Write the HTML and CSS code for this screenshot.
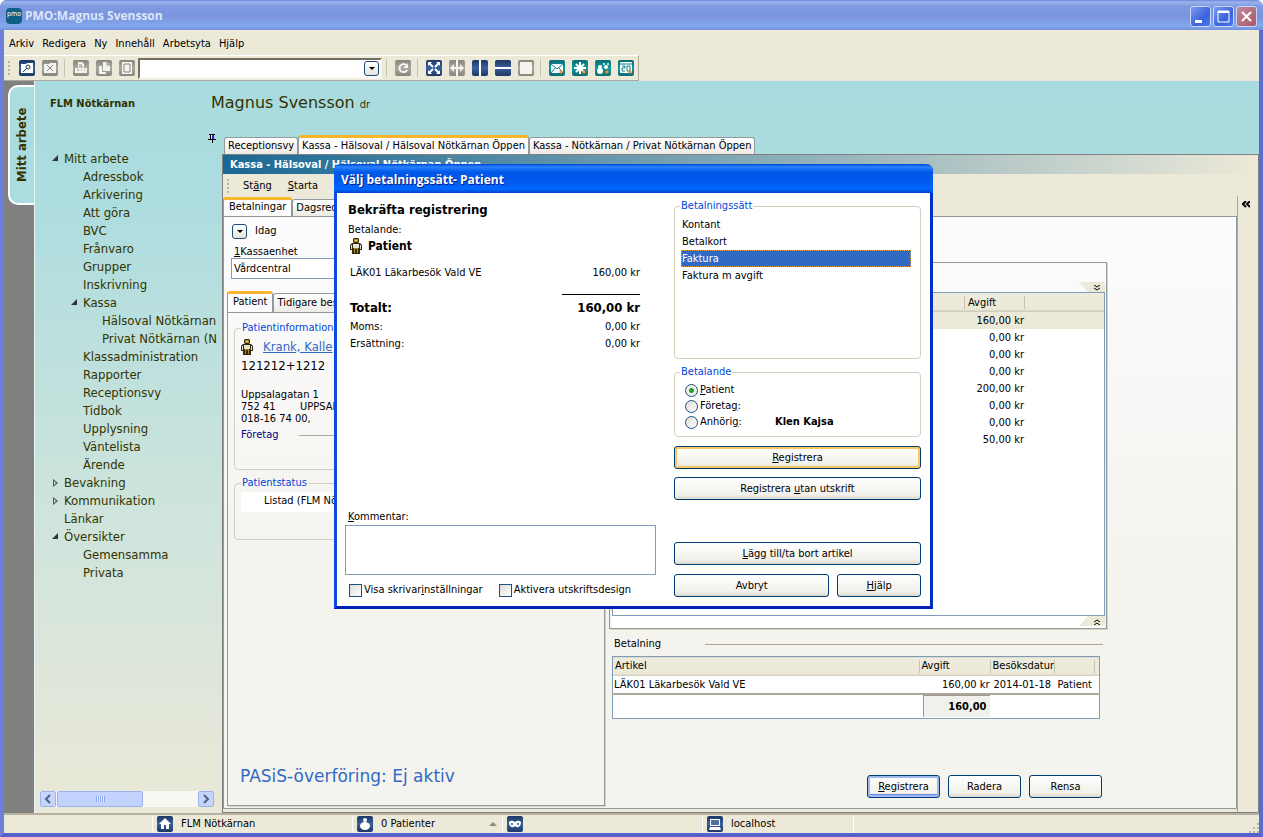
FILE: index.html
```html
<!DOCTYPE html>
<html lang="sv">
<head>
  <meta charset="UTF-8" />
  <meta name="viewport" content="width=device-width, initial-scale=1.0"/>
  <title>PMO:Magnus Svensson</title>
  <link rel="stylesheet" href="styles.css">
</head>
<body>
  <!-- Shared icons -->
  <svg class="defs" width="0" height="0" aria-hidden="true">
    <defs>
      <linearGradient id="navy" x1="0" y1="0" x2="0" y2="1"><stop offset="0" stop-color="#1c3765"/><stop offset=".5" stop-color="#3a619c"/><stop offset="1" stop-color="#1c3765"/></linearGradient>
      <linearGradient id="grey" x1="0" y1="0" x2="0" y2="1"><stop offset="0" stop-color="#87867e"/><stop offset=".5" stop-color="#aaa9a0"/><stop offset="1" stop-color="#87867e"/></linearGradient>
      <linearGradient id="teal" x1="0" y1="0" x2="0" y2="1"><stop offset="0" stop-color="#0b6a74"/><stop offset=".5" stop-color="#129aa0"/><stop offset="1" stop-color="#0b6a74"/></linearGradient>
      <symbol id="person" viewBox="0 0 12 16">
        <path d="M4 0h4l1 1v3l-1 1h2l2 2v5h-2v4H2v-4H0V7l2-2h2L3 4V1z" fill="#33290f"/>
        <path d="M4 1h4v3H4zM4 10h1v5H4zM7 10h1v5H7zM5 10h2v1H5z" fill="#b08a16"/>
        <path d="M3 6h6v4H3zM1 7h1v4H1zM10 7h1v4h-1z" fill="#e8e4d4"/><path d="M5 2h2v1H5z" fill="#f0d860"/>
      </symbol>
    </defs>
  </svg>

  <div class="window">
    <!-- Title bar -->
    <header class="titlebar">
      <span class="logo">pmo</span>
      <h1>PMO:Magnus Svensson</h1>
      <div class="win-buttons">
        <button type="button" aria-label="Minimera"><svg width="19" height="19"><path d="M4 13h7v3H4z" fill="#fff"/></svg></button>
        <button type="button" aria-label="Maximera"><svg width="19" height="19"><path d="M4 4h11v11H4z" fill="none" stroke="#fff"/><path d="M4 4h11v2H4z" fill="#fff"/></svg></button>
        <button type="button" class="close" aria-label="Stäng"><svg width="19" height="19"><path d="M5 5l9 9M14 5l-9 9" stroke="#fff" stroke-width="2"/></svg></button>
      </div>
    </header>

    <!-- Menu -->
    <nav class="menubar">
      <a href="#">Arkiv</a>
      <a href="#">Redigera</a>
      <a href="#">Ny</a>
      <a href="#">Innehåll</a>
      <a href="#">Arbetsyta</a>
      <a href="#">Hjälp</a>
    </nav>

    <!-- Toolbar -->
    <div class="toolbar">
      <span class="grip"></span>
      <div class="tools">
        <button type="button" aria-label="Sök"><svg viewBox="0 0 16 16"><rect width="16" height="16" rx="2" fill="url(#navy)"/><path d="M2 4h5l1-1h6v10H2z" fill="#fff"/><circle cx="9" cy="7" r="2" fill="none" stroke="#1c3765"/><path d="M8 8l-4 4" stroke="#1c3765"/></svg></button>
        <button type="button" aria-label="Stäng patient"><svg viewBox="0 0 16 16"><rect width="16" height="16" rx="2" fill="url(#grey)"/><path d="M2 4h5l1-1h6v10H2z" fill="#f4f3ee"/><path d="M5 5l6 6M11 5l-6 6" stroke="#87867e"/></svg></button>
      </div>
      <span class="sep"></span>
      <div class="tools">
        <button type="button" aria-label="Skriv ut"><svg viewBox="0 0 16 16"><rect width="16" height="16" rx="2" fill="url(#grey)"/><path d="M5 2h4l2 2v4h3v5H2V8h3z" fill="#f4f3ee"/><path d="M6 5h3M6 7h4M4 10h2M8 10h1M11 10h1" stroke="#87867e"/></svg></button>
        <button type="button" aria-label="Kopiera"><svg viewBox="0 0 16 16"><rect width="16" height="16" rx="2" fill="url(#grey)"/><path d="M7 2h4l3 3v6H7z" fill="#f4f3ee"/><path d="M3 6h3v6h4v2H3z" fill="#f4f3ee"/><path d="M11 2v3h3" fill="none" stroke="#87867e"/></svg></button>
        <button type="button" aria-label="Dokument"><svg viewBox="0 0 16 16"><rect width="16" height="16" rx="2" fill="url(#grey)"/><path d="M3 2h10v12H3z" fill="#f4f3ee"/><path d="M5 4h6v8H5z" fill="none" stroke="#87867e"/></svg></button>
      </div>
      <div class="combo">
        <input type="text" aria-label="Sökfält">
        <button type="button" class="drop" aria-label="Visa lista"></button>
      </div>
      <span class="sep after-combo"></span>
      <div class="tools">
        <button type="button" aria-label="Uppdatera"><svg viewBox="0 0 16 16"><rect width="16" height="16" rx="2" fill="url(#grey)"/><path d="M11 5a4 4 0 1 0 1 5" fill="none" stroke="#f4f3ee" stroke-width="2"/><path d="M13 3v5H8z" fill="#f4f3ee"/></svg></button>
      </div>
      <span class="sep"></span>
      <div class="tools">
        <button type="button" aria-label="Maximera yta"><svg viewBox="0 0 16 16"><rect width="16" height="16" rx="2" fill="url(#navy)"/><path d="M3 3l4 4M13 3L9 7M3 13l4-4M13 13L9 9" stroke="#fff" stroke-width="2"/><path d="M2 2h4L2 6zM14 2h-4l4 4zM2 14h4l-4-4zM14 14h-4l4-4z" fill="#fff"/></svg></button>
        <button type="button" aria-label="Bredda"><svg viewBox="0 0 16 16"><rect width="16" height="16" rx="2" fill="url(#grey)"/><path d="M7 0h2v16H7zM1 8l4-4v3h6V4l4 4-4 4V9H5v3z" fill="#f4f3ee"/></svg></button>
        <button type="button" aria-label="Dela lodrätt"><svg viewBox="0 0 16 16"><rect width="16" height="16" rx="2" fill="url(#navy)"/><path d="M7 0h2v16H7z" fill="#fff"/></svg></button>
        <button type="button" aria-label="Dela vågrätt"><svg viewBox="0 0 16 16"><rect width="16" height="16" rx="2" fill="url(#navy)"/><path d="M0 7h16v2H0z" fill="#fff"/></svg></button>
        <button type="button" aria-label="En yta"><svg viewBox="0 0 16 16"><rect width="16" height="16" rx="2" fill="url(#grey)"/><rect x="2" y="2" width="12" height="12" rx="1" fill="#f4f3ee"/></svg></button>
      </div>
      <span class="sep"></span>
      <div class="tools">
        <button type="button" aria-label="Nytt meddelande"><svg viewBox="0 0 16 16"><rect width="16" height="16" rx="2" fill="url(#teal)"/><path d="M2 4h12v9H2z" fill="#fff"/><path d="M2 4l6 5 6-5M2 13l4-5M14 13l-4-5" fill="none" stroke="#0f7f86"/><path d="M12 10l2 2-2 2-2-2z" fill="#f58a1f"/></svg></button>
        <button type="button" aria-label="Ny aktivitet"><svg viewBox="0 0 16 16"><rect width="16" height="16" rx="2" fill="url(#teal)"/><path d="M8 2v12M2 8h12M4 4l8 8M12 4l-8 8" stroke="#fff" stroke-width="2"/><path d="M12 10l2 2-2 2-2-2z" fill="#f58a1f"/></svg></button>
        <button type="button" aria-label="Ny grupp"><svg viewBox="0 0 16 16"><rect width="16" height="16" rx="2" fill="url(#teal)"/><circle cx="5" cy="11" r="3" fill="#fff"/><circle cx="5" cy="7" r="2" fill="#fff"/><circle cx="11" cy="7" r="2" fill="#fff"/><circle cx="9" cy="4" r="1" fill="#fff"/><circle cx="13" cy="4" r="1" fill="#fff"/><path d="M12 10l2 2-2 2-2-2z" fill="#f58a1f"/></svg></button>
        <button type="button" aria-label="Ny bokning"><svg viewBox="0 0 16 16"><rect width="16" height="16" rx="2" fill="url(#teal)"/><rect x="2" y="2" width="12" height="11" rx="1" fill="#fff"/><path d="M2 4h12M4 6h3v2H4v3h3M9 6h3v5H9z" fill="none" stroke="#0f7f86"/><path d="M12 10l2 2-2 2-2-2z" fill="#f58a1f"/></svg></button>
      </div>
    </div>

    <!-- Work area -->
    <div class="work">
      <div class="rail"><button type="button" class="rail-tab">Mitt arbete</button></div>

      <aside class="sidebar">
        <h2>FLM Nötkärnan</h2>
        <ul class="tree">
          <li class="open"><a href="#">Mitt arbete</a>
            <ul>
              <li><a href="#">Adressbok</a></li>
              <li><a href="#">Arkivering</a></li>
              <li><a href="#">Att göra</a></li>
              <li><a href="#">BVC</a></li>
              <li><a href="#">Frånvaro</a></li>
              <li><a href="#">Grupper</a></li>
              <li><a href="#">Inskrivning</a></li>
              <li class="open"><a href="#">Kassa</a>
                <ul>
                  <li><a href="#">Hälsoval Nötkärnan</a></li>
                  <li><a href="#">Privat Nötkärnan (N</a></li>
                </ul>
              </li>
              <li><a href="#">Klassadministration</a></li>
              <li><a href="#">Rapporter</a></li>
              <li><a href="#">Receptionsvy</a></li>
              <li><a href="#">Tidbok</a></li>
              <li><a href="#">Upplysning</a></li>
              <li><a href="#">Väntelista</a></li>
              <li><a href="#">Ärende</a></li>
            </ul>
          </li>
          <li class="closed"><a href="#">Bevakning</a></li>
          <li class="closed"><a href="#">Kommunikation</a></li>
          <li><a href="#">Länkar</a></li>
          <li class="open"><a href="#">Översikter</a>
            <ul>
              <li><a href="#">Gemensamma</a></li>
              <li><a href="#">Privata</a></li>
            </ul>
          </li>
        </ul>
        <div class="hscroll">
          <button type="button" aria-label="Rulla vänster"><svg width="14" height="14"><path d="M9 3L5 7l4 4" fill="none" stroke="#4d6185" stroke-width="2"/></svg></button>
          <span class="thumb"></span>
          <button type="button" aria-label="Rulla höger"><svg width="14" height="14"><path d="M5 3l4 4-4 4" fill="none" stroke="#4d6185" stroke-width="2"/></svg></button>
        </div>
      </aside>

      <main class="workspace">
        <div class="user">Magnus Svensson <small>dr</small></div>
        <div class="tab-row">
          <svg class="pin" width="8" height="9"><path d="M1 0h6v1H6v4h2v1H5v3H4V6H0V5h2V1H1z" fill="#000"/><path d="M3 1h1v4H3z" fill="#cfe"/><path d="M4 1h2v4H4z" fill="#22c"/></svg>
          <div class="tabs view-tabs">
            <button type="button">Receptionsvy</button>
            <button type="button" class="active">Kassa - Hälsoval / Hälsoval Nötkärnan Öppen</button>
            <button type="button">Kassa - Nötkärnan / Privat Nötkärnan Öppen</button>
          </div>
        </div>

        <section class="panel">
          <h2 class="panel-title">Kassa - Hälsoval / Hälsoval Nötkärnan Öppen</h2>
          <div class="panel-body">
            <div class="panel-main">
              <div class="actions">
                <span class="grip"></span>
                <a href="#">St<u>ä</u>ng</a>
                <a href="#"><u>S</u>tarta</a>
              </div>
              <div class="tabs">
                <button type="button" class="active">Betalningar</button>
                <button type="button">Dagsred</button>
              </div>
              <div class="page">
                <div class="left">
                  <div class="period"><button type="button" class="drop" aria-label="Välj period"></button><span>Idag</span></div>
                  <label class="unit-label" for="unit"><u>1</u>Kassaenhet</label>
                  <input class="unit" id="unit" type="text" value="Vårdcentral">
                  <div class="tabs">
                    <button type="button" class="active">Patient</button>
                    <button type="button">Tidi<u>g</u>are besök</button>
                  </div>
                  <div class="patient">
                    <fieldset class="info">
                      <legend>Patientinformation</legend>
                      <div class="name"><svg class="person"><use href="#person"/></svg><a href="#">Krank, Kalle</a></div>
                      <p class="pnr">121212+1212</p>
                      <address>Uppsalagatan 1<br><span class="zip">752 41</span>UPPSALA<br>018-16 74 00,</address>
                      <p class="rule">Företag</p>
                    </fieldset>
                    <fieldset class="status">
                      <legend>Patientstatus</legend>
                      <p>Listad (FLM Nötkärnan)</p>
                    </fieldset>
                    <p class="pasis">PASiS-överföring: Ej aktiv</p>
                  </div>
                </div>

                <div class="right">
                  <div class="articles">
                    <div class="fold">
                      <button type="button" aria-label="Fäll ner"><svg width="6" height="6"><path d="M0 0l3 2 3-2M0 3l3 2 3-2" fill="none" stroke="#000"/></svg></button>
                    </div>
                    <div class="list">
                      <table>
                        <thead><tr><th></th><th>Avgift</th><th></th></tr></thead>
                        <tbody>
                          <tr class="selected"><td></td><td>160,00 kr</td><td></td></tr>
                          <tr><td></td><td>0,00 kr</td><td></td></tr>
                          <tr><td></td><td>0,00 kr</td><td></td></tr>
                          <tr><td></td><td>0,00 kr</td><td></td></tr>
                          <tr><td></td><td>200,00 kr</td><td></td></tr>
                          <tr><td></td><td>0,00 kr</td><td></td></tr>
                          <tr><td></td><td>0,00 kr</td><td></td></tr>
                          <tr><td></td><td>50,00 kr</td><td></td></tr>
                        </tbody>
                      </table>
                    </div>
                    <div class="fold bottom">
                      <button type="button" aria-label="Fäll upp"><svg width="6" height="6"><path d="M0 3l3-2 3 2M0 6l3-2 3 2" fill="none" stroke="#000"/></svg></button>
                    </div>
                  </div>
                  <p class="rule payment-title">Betalning</p>
                  <table class="payment">
                    <thead><tr><th>Artikel</th><th>Avgift</th><th>Besöksdatur</th><th></th><th></th></tr></thead>
                    <tbody><tr><td>LÄK01 Läkarbesök Vald VE</td><td>160,00 kr</td><td>2014-01-18</td><td colspan="2">Patient</td></tr></tbody>
                    <tfoot><tr><td></td><td><span>160,00</span></td><td></td><td colspan="2"></td></tr></tfoot>
                  </table>
                  <div class="buttons">
                    <button type="button" class="btn focused"><u>R</u>egistrera</button>
                    <button type="button" class="btn">Radera</button>
                    <button type="button" class="btn">Rensa</button>
                  </div>
                </div>
              </div>
            </div>
            <div class="panel-side"><button type="button" aria-label="Visa sidopanel"><svg width="8" height="7"><path d="M4 0L1 3l3 3M8 0L5 3l3 3" fill="none" stroke="#000" stroke-width="2"/></svg></button></div>
          </div>
        </section>
      </main>
    </div>

    <!-- Status bar -->
    <footer class="statusbar">
      <span></span>
      <span><svg viewBox="0 0 16 16"><rect width="16" height="16" rx="2" fill="url(#navy)"/><path d="M8 2l6 6h-2v5H9V9H7v4H4V8H2z" fill="#fff"/></svg>FLM Nötkärnan</span>
      <span><svg viewBox="0 0 16 16"><rect width="16" height="16" rx="2" fill="url(#navy)"/><circle cx="8" cy="4" r="2" fill="#fff"/><ellipse cx="8" cy="10" rx="5" ry="4" fill="#fff"/></svg>0 Patienter<i class="up"></i></span>
      <span><svg viewBox="0 0 16 16"><rect width="16" height="16" rx="2" fill="url(#navy)"/><path d="M2 6c2-2 4-1 6 0 2-1 4-2 6 0 0 4-3 7-6 4-3 3-6 0-6-4z" fill="#fff"/><circle cx="5" cy="8" r="1" fill="#2e5088"/><circle cx="11" cy="8" r="1" fill="#2e5088"/></svg></span>
      <span><svg viewBox="0 0 16 16"><rect width="16" height="16" rx="2" fill="url(#navy)"/><path d="M3 3h10v7H3z" fill="#fff"/><path d="M4 4h8v5H4z" fill="#55719f"/><path d="M3 11h10l1 3H2z" fill="#fff"/></svg>localhost</span>
      <span></span>
      <svg class="resize" width="10" height="10"><path d="M8 0h2v2H8zM4 4h2v2H4zM8 4h2v2H8zM0 8h2v2H0zM4 8h2v2H4zM8 8h2v2H8z" fill="#b8b4a2"/></svg>
    </footer>
  </div>

  <!-- Payment dialog -->
  <form class="dialog" role="dialog" aria-labelledby="dialog-title">
    <h2 class="dialog-title" id="dialog-title">Välj betalningssätt- Patient</h2>
    <div class="dialog-body">
      <div class="summary">
        <h3>Bekräfta registrering</h3>
        <p class="payer-label">Betalande:</p>
        <p class="payer"><svg class="person"><use href="#person"/></svg>Patient</p>
        <div class="line article"><span>LÄK01 Läkarbesök Vald VE</span><span>160,00 kr</span></div>
        <div class="line total"><span>Totalt:</span><span>160,00 kr</span></div>
        <div class="line"><span>Moms:</span><span>0,00 kr</span></div>
        <div class="line"><span>Ersättning:</span><span>0,00 kr</span></div>
        <label class="comment-label" for="comment"><u>K</u>ommentar:</label>
        <textarea id="comment"></textarea>
        <div class="checks">
          <label><input type="checkbox">Visa skrivar<u>i</u>nställningar</label>
          <label><input type="checkbox">Aktivera utskriftsdesign</label>
        </div>
      </div>
      <div class="choices">
        <fieldset class="methods">
          <legend>Betalningssätt</legend>
          <select size="8" aria-label="Betalningssätt">
            <option>Kontant</option>
            <option>Betalkort</option>
            <option selected>Faktura</option>
            <option>Faktura m avgift</option>
          </select>
        </fieldset>
        <fieldset class="payers">
          <legend>Betalande</legend>
          <label><input type="radio" name="payer" checked><span><u>P</u>atient</span></label>
          <label><input type="radio" name="payer"><span>Företa<u>g</u>:</span></label>
          <label><input type="radio" name="payer"><span>Anhöri<u>g</u>:</span><b>Klen Kajsa</b></label>
        </fieldset>
        <button type="button" class="btn default"><u>R</u>egistrera</button>
        <button type="button" class="btn">Registrera <u>u</u>tan utskrift</button>
        <button type="button" class="btn lower"><u>L</u>ägg till/ta bort artikel</button>
        <div class="pair">
          <button type="button" class="btn">Avbryt</button>
          <button type="button" class="btn"><u>H</u>jälp</button>
        </div>
      </div>
    </div>
  </form>
</body>
</html>
```
FILE: styles.css
```css
/* Global Reset */
* { margin: 0; padding: 0; box-sizing: border-box; }
html, body { height: 100%; }
body {
  position: relative;
  font-family: "DejaVu Sans Condensed", "DejaVu Sans", sans-serif;
  font-size: 11px;
  line-height: 16px;
  color: #000;
  overflow: hidden;
}
button, input, textarea, select { font: inherit; color: inherit; }
button { background: none; border: 0; }
a { color: inherit; text-decoration: none; }
ul { list-style: none; }
svg { display: block; flex: none; }
table { border-collapse: collapse; table-layout: fixed; width: 100%; }
th { font-weight: normal; text-align: left; }
.defs { position: absolute; }
.person { width: 12px; height: 16px; }

/* Window */
.window {
  display: flex;
  flex-direction: column;
  height: 100%;
  background: #ece9d8;
  border: 4px solid #6b7fdb;
  border-top: 0;
  border-right-color: #5b6bd0;
  border-bottom-color: #5560c8;
  border-radius: 7px 7px 0 0;
}
.titlebar {
  display: flex;
  align-items: center;
  height: 30px;
  margin: 0 -4px;
  padding: 2px 6px 0;
  background: linear-gradient(#6a86d8, #9cb4ec 2px, #7f9be2 6px, #7a94de 16px, #82a8ec 26px, #7490dc);
  border-radius: 7px 7px 0 0;
}
.logo {
  width: 16px;
  height: 16px;
  border-radius: 4px;
  background: #0f5f86;
  color: #fff;
  font-size: 7px;
  line-height: 13px;
  text-align: center;
}
.titlebar h1 {
  margin-left: 3px;
  font: bold 12px/20px "Open Sans", sans-serif;
  color: #dce6fa;
}
.win-buttons { display: flex; gap: 2px; margin-left: auto; }
.win-buttons button {
  width: 21px;
  height: 21px;
  border: 1px solid #c9d5f6;
  border-radius: 3px;
  background: linear-gradient(135deg, #7c9cf0, #3c62dc 60%, #4a7af0);
}
.win-buttons .close { background: linear-gradient(135deg, #c08a9a, #a8586a); }

/* Menu */
.menubar { display: flex; gap: 8px; height: 25px; padding: 6px 5px 0; }

/* Toolbar */
.toolbar {
  display: flex;
  align-items: center;
  align-self: flex-start;
  height: 26px;
  padding: 0 4px;
  border: 1px solid #fff;
  border-left: 0;
  border-right-color: #aca899;
  border-bottom-color: #aca899;
}
.grip { width: 2px; height: 14px; margin-right: 9px; background: repeating-linear-gradient(#b8b4a4 0 2px, transparent 2px 4px); }
.tools { display: flex; gap: 7px; }
.tools button, .tools svg { width: 16px; height: 16px; display: block; }
.sep { width: 1px; height: 18px; margin: 0 8px 0 6px; background: #c5c2b2; }
.after-combo { margin-left: 4px; }
.combo {
  display: flex;
  align-items: center;
  width: 244px;
  height: 21px;
  margin-left: 3px;
  padding-right: 1px;
  background: #fff;
  border: 2px solid #716f64;
  border-color: #716f64 #f6f5ee #f6f5ee #716f64;
}
.combo input { flex: 1; min-width: 0; border: 0; outline: 0; }
.drop {
  width: 15px;
  height: 15px;
  border: 1px solid #1d4a75;
  border-radius: 3px;
  background: linear-gradient(#fff, #e6e4da);
}
.drop::before {
  content: "";
  display: block;
  width: 0;
  margin: 0 auto;
  border: 3px solid transparent;
  border-top-color: #000;
  border-bottom: 0;
}

/* Work area */
.work {
  flex: 1;
  display: flex;
  min-height: 0;
  background: linear-gradient(#a8dbdf, #acdcdf 15%, #cfe4dc 60%, #e8e8d8 95%);
}
.rail { width: 30px; padding: 4px 0 0 4px; background: #808080; }
.rail-tab {
  width: 26px;
  height: 120px;
  background: #aadce0;
  border: 2px solid #fff;
  border-left: 0;
  border-radius: 0 10px 10px 0;
  font-size: 13px;
  font-weight: bold;
  color: #333300;
  writing-mode: vertical-rl;
  transform: rotate(180deg);
}

/* Sidebar */
.sidebar {
  display: flex;
  flex-direction: column;
  width: 188px;
  padding: 15px 8px 6px 5px;
  border-left: 1px solid #e8f4f0;
  color: #333300;
}
.sidebar h2 { margin: 0 0 38px 10px; font-size: 11px; line-height: 16px; }
.tree { flex: 1; margin-right: -8px; padding-left: 24px; font-size: 13px; line-height: 18px; white-space: nowrap; }
.tree ul { padding-left: 19px; }
.open::before, .closed::before {
  content: "";
  float: left;
  width: 6px;
  height: 6px;
  margin: 5px 0 0 -12px;
  background: #333;
  clip-path: polygon(100% 0, 100% 100%, 0 100%);
}
.closed::before { height: 8px; width: 5px; margin: 5px 0 0 -11px; background: #555; clip-path: polygon(0 0, 100% 50%, 0 100%, 0 0, 1px 2px, 1px 6px, 3px 50%, 1px 2px); }
.hscroll { display: flex; background: #f8f7f2; }
.hscroll button {
  width: 16px;
  height: 16px;
  border: 1px solid #9bb3ec;
  border-radius: 2px;
  background: #c6d5fb;
}
.hscroll button:last-child { margin-left: auto; }
.thumb {
  width: 86px;
  margin-left: 1px;
  border: 1px solid #9bb3ec;
  border-radius: 2px;
  background: repeating-linear-gradient(90deg, #8aa5e8 0 1px, #e4ecff 1px 2px) center / 9px 6px no-repeat, #c3d3fd;
}

/* Workspace */
.workspace { flex: 1; display: flex; flex-direction: column; min-width: 0; }
.user { margin: 11px 0 0 -11px; font: 16px/22px "DejaVu Sans", sans-serif; color: #333300; }
.user small { font: 11px "DejaVu Sans Condensed", sans-serif; }
.tab-row { display: flex; align-items: flex-end; margin: 20px 0 0 -14px; }
.pin { margin: 0 8px 11px 0; }
.tabs { display: flex; align-items: flex-end; }
.tabs button {
  height: 17px;
  padding: 0 3px;
  background: linear-gradient(#fff, #ecebe6);
  border: 1px solid #919b9c;
  border-bottom: 0;
  border-radius: 3px 3px 0 0;
  line-height: 16px;
  white-space: nowrap;
}
.tabs .active {
  height: 19px;
  padding: 0 5px 2px;
  background: #fcfcfe;
  border-top: 3px solid #f9b52c;
  line-height: 14px;
}
.view-tabs .active { padding: 0 3px 1px; }
.panel { flex: 1; display: flex; flex-direction: column; min-height: 0; border: 1px solid #808080; background: #ece9d8; }
.panel-title {
  height: 19px;
  padding-left: 7px;
  background: linear-gradient(90deg, #1a6894, #ece9d8);
  color: #fff;
  font-size: 11px;
  line-height: 19px;
}
.panel-body { flex: 1; display: flex; min-height: 0; }
.panel-main { flex: 1; display: flex; flex-direction: column; min-width: 0; padding-bottom: 3px; }
.panel-side { width: 21px; margin-top: 22px; padding: 5px 4px; border-left: 1px solid #aca899; }
.panel-side button { display: block; }
.actions { display: flex; align-items: center; gap: 16px; height: 23px; padding-left: 4px; }
.actions .grip { margin-right: -2px; }
.page {
  flex: 1;
  display: grid;
  grid-template-columns: 378fr 498fr 125fr;
  column-gap: 4px;
  min-height: 0;
  padding: 0 0 2px 3px;
  background: linear-gradient(#fcfcfe, #f4f3ee 60%);
  border: 1px solid #919b9c;
}
.left, .right { display: flex; flex-direction: column; min-width: 0; min-height: 0; }
.period { display: flex; align-items: center; gap: 8px; padding: 6px 0 0 5px; }
.unit-label { margin: 6px 0 0 7px; line-height: 13px; }
.unit {
  height: 21px;
  margin: 0 5px 12px 4px;
  padding: 0 2px;
  background: #fff;
  border: 1px solid #7f9db9;
}
.left .tabs button { height: 19px; }
.left .tabs .active { height: 21px; }
.patient {
  flex: 1;
  display: flex;
  flex-direction: column;
  padding: 8px 6px 19px;
  border: 1px solid #919b9c;
  box-shadow: 1px 1px #d8d5c8;
}
fieldset { border: 1px solid #d0d0bf; border-radius: 4px; min-width: 0; padding: 0 5px; }
legend { padding: 0 1px; color: #0046d5; line-height: 14px; }
.info { height: 149px; padding-left: 6px; }
.info .name { display: flex; gap: 10px; align-items: center; padding-top: 4px; font-size: 13px; }
.name a { color: #316ac5; text-decoration: underline; }
.pnr { margin-top: 3px; font-size: 13px; }
address { margin-top: 15px; font-style: normal; line-height: 12px; }
.zip { display: inline-block; width: 59px; }
.rule { display: flex; align-items: center; gap: 20px; }
.rule::after { content: ""; flex: 1; border-top: 1px solid #aca899; }
.info .rule { margin-top: 2px; color: #000080; }
.status { height: 64px; margin-top: 6px; padding: 2px 6px; }
.status p { padding-left: 23px; height: 20px; line-height: 18px; background: #fff; }
.pasis { margin: auto 0 0 6px; color: #316ac5; font: 17px/20px "DejaVu Sans", sans-serif; }

/* Articles and payment */
.articles {
  flex: 1;
  display: flex;
  flex-direction: column;
  margin-top: 45px;
  padding: 0 1px 0 2px;
  border: 1px solid #919b9c;
  box-shadow: 1px 1px #d8d5c8;
}
.fold { display: flex; justify-content: flex-end; align-items: flex-end; height: 29px; }
.fold button { width: 26px; height: 10px; padding: 2px 0 0 15px; background: #ece9d8; clip-path: polygon(0 0, 100% 0, 100% 100%, 35% 100%); }
.bottom { height: 12px; align-items: flex-start; background: #fff; }
.bottom button { clip-path: polygon(35% 0, 100% 0, 100% 100%, 0 100%); }
.list { flex: 1; background: #fff; border: 1px solid #7f9db9; }
th { height: 19px; padding: 0 3px; background: linear-gradient(#edebdd, #ece9d8 85%, #cbc7b8); position: relative; }
th:not(:last-child)::after { content: ""; position: absolute; right: 0; top: 3px; height: 13px; border-right: 1px solid #c7c5b2; }
td { height: 17px; padding: 0 1px; white-space: nowrap; line-height: 17px; }
.list th:nth-child(1) { width: 352px; }
.list th:nth-child(2) { width: 60px; }
td:nth-child(2) { text-align: right; }
.selected { background: #ece9d8; }
.payment-title { gap: 44px; margin: 7px 4px 4px 5px; }
.payment { width: 488px; margin-left: 3px; background: #fff; border: 1px solid #7f9db9; }
.payment th { padding: 0 2px; }
.payment th:nth-child(1) { width: 307px; }
.payment th:nth-child(2) { width: 71px; }
.payment th:nth-child(3) { width: 64px; }
.payment th:nth-child(4) { width: 40px; }
.payment tfoot { border-top: 2px solid #aca899; }
.payment tfoot td { height: 25px; }
.payment tfoot span { display: block; margin-left: 2px; padding: 2px 3px 2px 0; border: 1px solid #9d9a8c; border-width: 1px 0 0 1px; background: #f1f0ea; font-weight: bold; }
.payment td:nth-child(3) { padding-left: 3px; }
.payment td:nth-child(4) { padding-left: 3px; }
.buttons { display: flex; justify-content: flex-end; gap: 8px; margin: 56px 5px 8px; }
.buttons .btn { width: 73px; }
.btn {
  height: 23px;
  background: linear-gradient(#fff, #f1f0ea 80%, #dcd8cc);
  border: 1px solid #003c74;
  border-radius: 3px;
}
.focused { box-shadow: inset 0 0 0 2px #9cb8ee, inset 0 -3px #6f88e0; }
.default { box-shadow: inset 0 0 0 2px #fbc761; }

/* Status bar */
.statusbar {
  display: grid;
  grid-template-columns: 149px 200px 150px 200px 151px 1fr 10px;
  align-items: center;
  height: 20px;
  border-top: 2px solid #b5b1a0;
}
.statusbar span { display: flex; align-items: center; gap: 8px; height: 17px; padding-left: 4px; border-right: 1px solid #fff; }
.statusbar span svg { width: 16px; height: 16px; }
.statusbar span:nth-child(6) { border: 0; }
.up { margin: 0 5px 0 auto; border: 4px solid transparent; border-top: 0; border-bottom-color: #8d8a7c; }
.resize { align-self: end; }

/* Dialog */
.dialog {
  position: absolute;
  left: 334px;
  top: 164px;
  width: 599px;
  border: 3px solid #0a4ae0;
  border-top: 0;
  border-right-color: #0030c8;
  border-bottom-color: #0020b8;
  border-radius: 7px 7px 0 0;
  background: #fff;
}
.dialog-title {
  height: 29px;
  margin: 0 -3px;
  padding: 3px 7px;
  border-radius: 7px 7px 0 0;
  background: linear-gradient(#0046d0, #2a84ff 3px, #0058e8 8px, #0058ec 16px, #0068ff 25px, #0044cc);
  color: #fff;
  font: bold 12px/26px "Open Sans", sans-serif;
  text-shadow: 1px 1px #0a1883;
}
.dialog-body { display: flex; gap: 18px; height: 413px; padding: 6px 9px 9px 8px; }
.summary { flex: 311; display: flex; flex-direction: column; padding-top: 2px; margin-bottom: -1px; }
.summary h3 { margin: 0 3px 4px; font-size: 13px; line-height: 17px; }
.payer-label { padding-left: 3px; }
.payer { display: flex; align-items: center; gap: 6px; padding-left: 5px; font-size: 12px; font-weight: bold; }
.line { display: flex; justify-content: space-between; padding: 0 16px 0 5px; line-height: 17px; }
.article { margin: 10px 0 13px; }
.total { padding-bottom: 2px; font-size: 13px; font-weight: bold; }
.total span:last-child { width: 78px; padding-top: 4px; border-top: 1px solid #000; text-align: right; }
.total span:first-child { padding-top: 5px; }
.comment-label { margin-top: auto; padding-left: 3px; }
textarea { height: 50px; border: 1px solid #7f9db9; resize: none; }
.checks { display: flex; gap: 16px; padding: 7px 4px 0; }
.checks label { display: flex; align-items: center; }
input[type="checkbox"] { appearance: none; width: 13px; height: 13px; margin-right: 2px; border: 1px solid #1c5180; background: linear-gradient(135deg, #dcdcd7, #fff); }
.choices { flex: 247; display: flex; flex-direction: column; }
.methods { height: 160px; padding: 3px 9px 0 6px; }
.methods legend { margin-left: -1px; }
select { display: block; width: 100%; height: 136px; border: 0; outline: 0; overflow: hidden; background: #fff; }
option { height: 17px; padding: 2px 1px 0; line-height: 15px; min-height: 17px; }
option:checked { background: linear-gradient(#316ac5, #316ac5); color: #fff; outline: 1px dotted #e8a33d; outline-offset: -1px; }
.payers { height: 72px; margin: 6px 0 9px; padding-top: 3px; }
.payers label { display: flex; align-items: center; height: 16px; padding-left: 5px; }
.payers span { width: 75px; }
input[type="radio"] { appearance: none; width: 13px; height: 13px; margin-right: 2px; border: 1px solid #1c5180; border-radius: 50%; background: linear-gradient(135deg, #dcdcd7, #fff); }
input[type="radio"]:checked { background: radial-gradient(#21a121 0 2px, #f0f0ec 3px); }
.choices > .btn { margin-bottom: 8px; }
.choices > .lower { margin: auto 0 9px; }
.pair { display: flex; gap: 8px; }
.pair .btn { flex: 83; }
.pair .btn:first-child { flex: 156; }
```
